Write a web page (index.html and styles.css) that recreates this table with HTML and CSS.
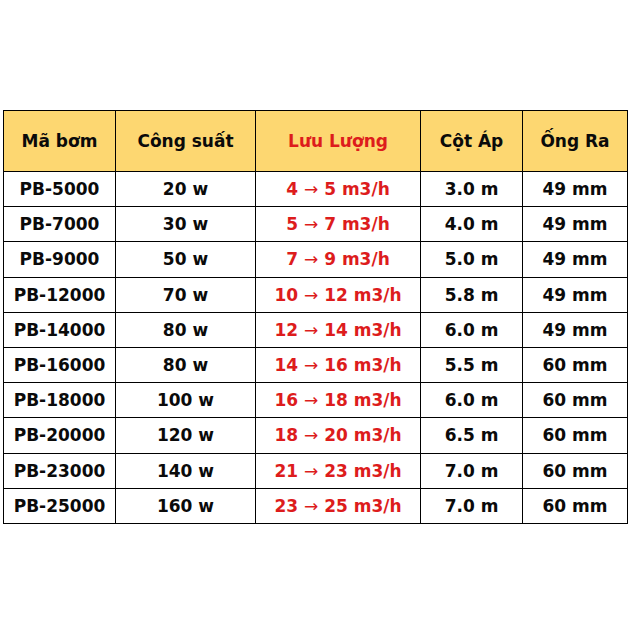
FILE: index.html
```html
<!DOCTYPE html>
<html>
<head>
<meta charset="utf-8">
<link rel="stylesheet" href="styles.css">
</head>
<body>
<table class="spec">
  <colgroup>
    <col class="c1"><col class="c2"><col class="c3"><col class="c4"><col class="c5">
  </colgroup>
  <thead>
    <tr class="head">
      <th>Mã bơm</th><th>Công suất</th><th class="red">Lưu Lượng</th><th>Cột Áp</th><th>Ống Ra</th>
    </tr>
  </thead>
  <tbody>
    <tr><td>PB-5000</td><td>20 w</td><td class="red">4 <span class="arr">→</span> 5 m3/h</td><td>3.0 m</td><td>49 mm</td></tr>
    <tr><td>PB-7000</td><td>30 w</td><td class="red">5 <span class="arr">→</span> 7 m3/h</td><td>4.0 m</td><td>49 mm</td></tr>
    <tr><td>PB-9000</td><td>50 w</td><td class="red">7 <span class="arr">→</span> 9 m3/h</td><td>5.0 m</td><td>49 mm</td></tr>
    <tr><td>PB-12000</td><td>70 w</td><td class="red">10 <span class="arr">→</span> 12 m3/h</td><td>5.8 m</td><td>49 mm</td></tr>
    <tr><td>PB-14000</td><td>80 w</td><td class="red">12 <span class="arr">→</span> 14 m3/h</td><td>6.0 m</td><td>49 mm</td></tr>
    <tr><td>PB-16000</td><td>80 w</td><td class="red">14 <span class="arr">→</span> 16 m3/h</td><td>5.5 m</td><td>60 mm</td></tr>
    <tr><td>PB-18000</td><td>100 w</td><td class="red">16 <span class="arr">→</span> 18 m3/h</td><td>6.0 m</td><td>60 mm</td></tr>
    <tr><td>PB-20000</td><td>120 w</td><td class="red">18 <span class="arr">→</span> 20 m3/h</td><td>6.5 m</td><td>60 mm</td></tr>
    <tr><td>PB-23000</td><td>140 w</td><td class="red">21 <span class="arr">→</span> 23 m3/h</td><td>7.0 m</td><td>60 mm</td></tr>
    <tr><td>PB-25000</td><td>160 w</td><td class="red">23 <span class="arr">→</span> 25 m3/h</td><td>7.0 m</td><td>60 mm</td></tr>
  </tbody>
</table>
</body>
</html>
```
FILE: styles.css
```css
html, body {
  margin: 0;
  padding: 0;
  background: #ffffff;
}
body {
  padding-top: 110px;
  padding-left: 3px;
}
.spec {
  border-collapse: collapse;
  table-layout: fixed;
  width: 625px;
  font-family: "DejaVu Sans", Verdana, sans-serif;
  font-weight: bold;
  font-size: 17px;
  color: #0a0a0a;
}
.c1 { width: 112px; }
.c2 { width: 140px; }
.c3 { width: 165px; }
.c4 { width: 102px; }
.c5 { width: 105px; }
.spec th, .spec td {
  border: 1px solid #000000;
  text-align: center;
  padding: 0;
  white-space: nowrap;
}
.spec th {
  height: 60px;
  background: #fdd771;
  font-weight: bold;
}
.spec td {
  height: 34.2px;
}
.red {
  color: #dd1c1c;
}
.arr {
  font-family: "DejaVu Sans", sans-serif;
  font-weight: normal;
}
```
